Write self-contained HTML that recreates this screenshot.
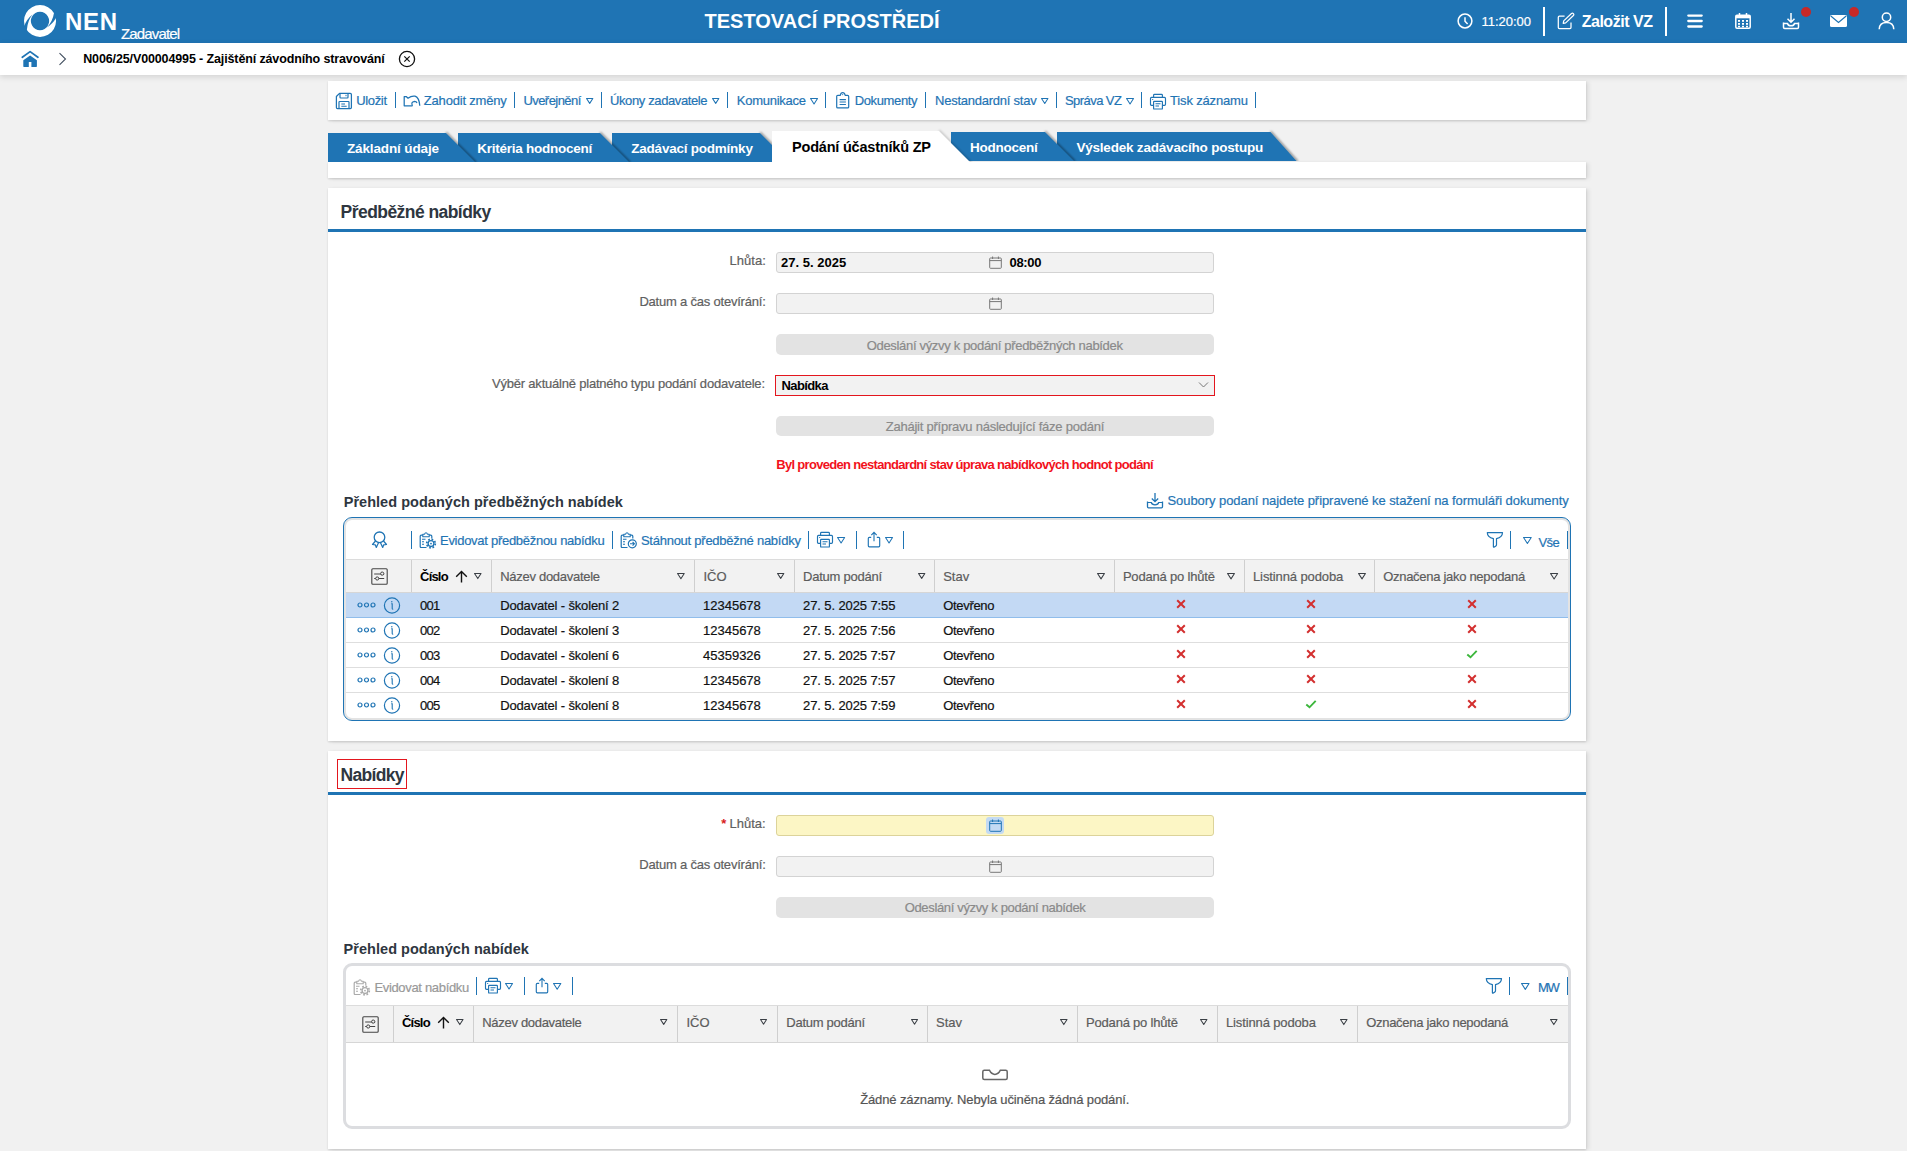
<!DOCTYPE html>
<html><head><meta charset="utf-8"><style>
html,body{margin:0;padding:0;width:1907px;height:1151px;overflow:hidden;background:#f1f1f1;font-family:"Liberation Sans",sans-serif;}
body>div,body>svg{position:absolute;}
.t{white-space:nowrap;}
.r{-webkit-text-stroke:0.2px currentColor;}
</style></head><body>
<div style="left:0px;top:0px;width:1907px;height:43px;background:#1f74b4"></div>
<svg style="left:24px;top:4.8px;width:32px;height:32px;" viewBox="0 0 32 32"><path fill="#fff" fill-rule="evenodd" d="M16 0a16 16 0 1 0 0.01 0zM16 6.85a9.15 9.15 0 1 1 -0.01 0z"/><path fill="#1f74b4" d="M8.6 9.6Q2.6 14.2 0.2 21.2L-1 21.5L-1 27L2.9 24.8Q3.6 15.5 8.6 9.6Z"/><path fill="#1f74b4" d="M22.6 22.6Q29 18.5 31.8 13.2L33 12.8L33 7L30 8Q28.6 17 22.6 22.6Z"/></svg>
<div class="t" style="left:65.00px;top:9.68px;font-size:24px;line-height:24px;letter-spacing:0.680px;color:#fff;font-weight:bold;">NEN</div>
<div class="t r" style="left:121.00px;top:26.30px;font-size:15px;line-height:15px;letter-spacing:-0.856px;color:#fff;">Zadavatel</div>
<div class="t" style="left:704.50px;top:11.47px;font-size:20px;line-height:20px;letter-spacing:0.011px;color:#fff;font-weight:bold;">TESTOVACÍ PROSTŘEDÍ</div>
<svg style="left:1457px;top:13px;width:16px;height:16px;" viewBox="0 0 16 16"><circle cx="8" cy="8" r="6.9" fill="none" stroke="#fff" stroke-width="1.5"/><path d="M8 4.2V8.3L10.6 11" fill="none" stroke="#fff" stroke-width="1.5"/></svg>
<div class="t r" style="left:1481.60px;top:14.70px;font-size:13px;line-height:13px;letter-spacing:-0.037px;color:#fff;">11:20:00</div>
<div style="left:1543px;top:7px;width:2px;height:29px;background:#fff"></div>
<svg style="left:1557px;top:12px;width:18px;height:18px;" viewBox="0 0 18 18"><path d="M7.6 4.1H2.4Q1.3 4.1 1.3 5.2V15.6Q1.3 16.7 2.4 16.7H12.9Q14 16.7 14 15.6V10.4" fill="none" stroke="#fff" stroke-width="1.25"/><path d="M6.2 11.4L6.7 8.9L14.5 1.5Q15.5 0.7 16.4 1.6Q17.3 2.5 16.4 3.5L8.7 10.9Z" fill="none" stroke="#fff" stroke-width="1.2" stroke-linejoin="round"/></svg>
<div class="t" style="left:1581.70px;top:13.56px;font-size:16px;line-height:16px;letter-spacing:-0.480px;color:#fff;font-weight:bold;">Založit VZ</div>
<div style="left:1665px;top:7px;width:2px;height:29px;background:#fff"></div>
<svg style="left:1686px;top:13px;width:18px;height:16px;" viewBox="0 0 18 16"><path d="M2.3 2.6H15.7M2.3 8H15.7M2.3 13.5H15.7" stroke="#fff" stroke-width="2.3" stroke-linecap="round"/></svg>
<svg style="left:1734px;top:12px;width:18px;height:18px;" viewBox="0 0 18 18"><rect x="1.8" y="3.3" width="14.4" height="13" rx="1.2" fill="none" stroke="#fff" stroke-width="1.5"/><rect x="1.8" y="3.3" width="14.4" height="3" fill="#fff"/><path d="M5.5 1V4.5M12.5 1V4.5" stroke="#fff" stroke-width="1.5"/><g fill="#fff"><rect x="4" y="8" width="2" height="1.8"/><rect x="8" y="8" width="2" height="1.8"/><rect x="12" y="8" width="2" height="1.8"/><rect x="4" y="11" width="2" height="1.8"/><rect x="8" y="11" width="2" height="1.8"/><rect x="12" y="11" width="2" height="1.8"/><rect x="4" y="13.8" width="2" height="1.5"/><rect x="8" y="13.8" width="2" height="1.5"/><rect x="12" y="13.8" width="2" height="1.5"/></g></svg>
<svg style="left:1782px;top:12px;width:18px;height:18px;" viewBox="0 0 18 18"><path d="M9 1V10M5.5 6.8L9 10.3L12.5 6.8" fill="none" stroke="#fff" stroke-width="1.5"/><path d="M1.5 10.5V15.3Q1.5 16.5 2.7 16.5H15.3Q16.5 16.5 16.5 15.3V10.5" fill="none" stroke="#fff" stroke-width="1.5"/><path d="M1.5 11.5H5.5Q6 13.8 9 13.8Q12 13.8 12.5 11.5H16.5" fill="none" stroke="#fff" stroke-width="1.5"/></svg>
<svg style="left:1801px;top:7px;width:10px;height:10px;" viewBox="0 0 10 10"><circle cx="5" cy="5" r="5" fill="#c62828"/></svg>
<svg style="left:1830px;top:15px;width:17px;height:12px;" viewBox="0 0 17 12"><rect x="0" y="0" width="17" height="12" rx="1.5" fill="#fff"/><path d="M0.8 1L8.5 7.5L16.2 1" fill="none" stroke="#1f74b4" stroke-width="1.2"/></svg>
<svg style="left:1849px;top:7px;width:10px;height:10px;" viewBox="0 0 10 10"><circle cx="5" cy="5" r="5" fill="#c62828"/></svg>
<svg style="left:1878px;top:12px;width:17px;height:18px;" viewBox="0 0 17 18"><circle cx="8.5" cy="5.3" r="4.2" fill="none" stroke="#fff" stroke-width="1.5"/><path d="M1.2 17.2Q1.5 10.6 8.5 10.6Q15.5 10.6 15.8 17.2" fill="none" stroke="#fff" stroke-width="1.5"/></svg>
<div style="left:0px;top:43px;width:1907px;height:32px;background:#fff;box-shadow:0 2px 6px rgba(0,0,0,0.13)"></div>
<svg style="left:21px;top:50px;width:18px;height:18px;" viewBox="0 0 18 18"><path d="M1.3 7.3L9.1 1.6L16.9 7.3" fill="none" stroke="#1f74b4" stroke-width="1.7" stroke-linecap="round" stroke-linejoin="round"/><path d="M2.3 10.2L9.1 5.4L15.9 10.2V16.3Q15.9 16.9 15.3 16.9H10.4V12H7.8V16.9H2.9Q2.3 16.9 2.3 16.3Z" fill="#1f74b4"/></svg>
<svg style="left:58px;top:52px;width:10px;height:14px;" viewBox="0 0 10 14"><path d="M1.5 1.2L7.5 7L1.5 12.8" fill="none" stroke="#3d4b5c" stroke-width="1.05"/></svg>
<div class="t" style="left:83.20px;top:53.32px;font-size:12.5px;line-height:12.5px;letter-spacing:-0.125px;color:#000;font-weight:bold;">N006/25/V00004995 - Zajištění závodního stravování</div>
<svg style="left:398px;top:50px;width:18px;height:18px;" viewBox="0 0 18 18"><circle cx="9" cy="9" r="7.6" fill="none" stroke="#111" stroke-width="1.3"/><path d="M6.3 6.3L11.7 11.7M11.7 6.3L6.3 11.7" stroke="#111" stroke-width="1.2"/></svg>
<div style="left:328px;top:81px;width:1258px;height:39px;background:#fff;box-shadow:0 1px 2px rgba(0,0,0,0.14),3px 1px 4px rgba(0,0,0,0.08)"></div>
<svg style="left:335px;top:92px;width:18px;height:18px;" viewBox="0 0 18 18"><path d="M4.5 1.4H15.3Q16.4 1.4 16.4 2.5V15.6Q16.4 16.6 15.3 16.6H2.5Q1.4 16.6 1.4 15.6V4.5Z" fill="none" stroke="#1f74b4" stroke-width="1.25" stroke-linejoin="round"/><path d="M5 1.4V5.3Q5 6 5.7 6H12.3Q13 6 13 5.3V1.4" fill="none" stroke="#1f74b4" stroke-width="1.2"/><path d="M11 2.8V4.2" stroke="#1f74b4" stroke-width="1"/><path d="M4 16.6V10.2Q4 9.5 4.7 9.5H13.3Q14 9.5 14 10.2V16.6" fill="none" stroke="#1f74b4" stroke-width="1.2"/><path d="M6.3 12H10M6.3 14.2H11.7" stroke="#1f74b4" stroke-width="1.1"/></svg>
<div class="t r" style="left:356.20px;top:94.20px;font-size:13px;line-height:13px;letter-spacing:-0.340px;color:#1f74b4;">Uložit</div>
<div style="left:395px;top:92px;width:1px;height:16px;background:#1f74b4"></div>
<svg style="left:403px;top:95px;width:18px;height:12px;" viewBox="0 0 18 12"><path d="M9.5 10.8H1.2V1.5H3.2L5 3.2Q8.5 0.6 12 1.2Q16 2.2 16.8 10.8" fill="none" stroke="#1f74b4" stroke-width="1.25" stroke-linejoin="round"/><path d="M9.5 10.8Q7.5 7 11.5 6.3Q13.5 6.3 14 8" fill="none" stroke="#1f74b4" stroke-width="1.2"/></svg>
<div class="t r" style="left:423.80px;top:94.20px;font-size:13px;line-height:13px;letter-spacing:-0.190px;color:#1f74b4;">Zahodit změny</div>
<div style="left:514px;top:92px;width:1px;height:16px;background:#1f74b4"></div>
<div class="t r" style="left:523.40px;top:94.20px;font-size:13px;line-height:13px;letter-spacing:-0.551px;color:#1f74b4;">Uveřejnění</div>
<svg style="left:586.4px;top:98.03999999999996px;width:7.400000000000091px;height:5.920000000000073px;overflow:visible" viewBox="0 0 7.400000000000091 5.920000000000073"><path d="M0.55 0.55H6.85L3.70 5.42Z" fill="none" stroke="#1f74b4" stroke-width="1.05" stroke-linejoin="round"/></svg>
<div style="left:601px;top:92px;width:1px;height:16px;background:#1f74b4"></div>
<div class="t r" style="left:610.00px;top:94.20px;font-size:13px;line-height:13px;letter-spacing:-0.383px;color:#1f74b4;">Úkony zadavatele</div>
<svg style="left:712.1999999999999px;top:98.03999999999996px;width:7.400000000000091px;height:5.920000000000073px;overflow:visible" viewBox="0 0 7.400000000000091 5.920000000000073"><path d="M0.55 0.55H6.85L3.70 5.42Z" fill="none" stroke="#1f74b4" stroke-width="1.05" stroke-linejoin="round"/></svg>
<div style="left:727px;top:92px;width:1px;height:16px;background:#1f74b4"></div>
<div class="t r" style="left:736.80px;top:94.20px;font-size:13px;line-height:13px;letter-spacing:-0.263px;color:#1f74b4;">Komunikace</div>
<svg style="left:810.0px;top:97.75999999999999px;width:8.100000000000023px;height:6.480000000000018px;overflow:visible" viewBox="0 0 8.100000000000023 6.480000000000018"><path d="M0.55 0.55H7.55L4.05 5.98Z" fill="none" stroke="#1f74b4" stroke-width="1.05" stroke-linejoin="round"/></svg>
<div style="left:825px;top:92px;width:1px;height:16px;background:#1f74b4"></div>
<svg style="left:835.5px;top:92.3px;width:14px;height:17px;" viewBox="0 0 14 17"><path d="M4.3 3.4H1.8Q0.7 3.4 0.7 4.4V14.9Q0.7 15.9 1.8 15.9H11.6Q12.7 15.9 12.7 14.9V4.4Q12.7 3.4 11.6 3.4H9.2Q8.6 0.7 6.7 0.7Q4.8 0.7 4.3 3.4Z" fill="none" stroke="#1f74b4" stroke-width="1.2" stroke-linejoin="round"/><circle cx="6.7" cy="2.6" r="0.6" fill="#1f74b4"/><path d="M3.6 7.6H9.9M3.6 10H9.9M3.6 12.5H9.9" stroke="#1f74b4" stroke-width="1.1"/></svg>
<div class="t r" style="left:854.70px;top:94.20px;font-size:13px;line-height:13px;letter-spacing:-0.360px;color:#1f74b4;">Dokumenty</div>
<div style="left:925px;top:92px;width:1px;height:16px;background:#1f74b4"></div>
<div class="t r" style="left:935.00px;top:94.20px;font-size:13px;line-height:13px;letter-spacing:-0.237px;color:#1f74b4;">Nestandardní stav</div>
<svg style="left:1041.4px;top:98.00000000000009px;width:7.499999999999773px;height:5.999999999999819px;overflow:visible" viewBox="0 0 7.499999999999773 5.999999999999819"><path d="M0.55 0.55H6.95L3.75 5.50Z" fill="none" stroke="#1f74b4" stroke-width="1.05" stroke-linejoin="round"/></svg>
<div style="left:1056px;top:92px;width:1px;height:16px;background:#1f74b4"></div>
<div class="t r" style="left:1065.00px;top:94.20px;font-size:13px;line-height:13px;letter-spacing:-0.566px;color:#1f74b4;">Správa VZ</div>
<svg style="left:1126.1000000000001px;top:97.76000000000013px;width:8.099999999999682px;height:6.4799999999997455px;overflow:visible" viewBox="0 0 8.099999999999682 6.4799999999997455"><path d="M0.55 0.55H7.55L4.05 5.98Z" fill="none" stroke="#1f74b4" stroke-width="1.05" stroke-linejoin="round"/></svg>
<div style="left:1141px;top:92px;width:1px;height:16px;background:#1f74b4"></div>
<svg style="left:1149px;top:92.5px;width:18px;height:18px;" viewBox="0 0 18 18"><path d="M4.6 4.3V2.2Q4.6 1.3 5.5 1.3H12.5Q13.4 1.3 13.4 2.2V4.3" fill="none" stroke="#1f74b4" stroke-width="1.15"/><path d="M4.6 12.3H2.5Q1.5 12.3 1.5 11.3V5.4Q1.5 4.4 2.5 4.4H15.5Q16.5 4.4 16.5 5.4V11.3Q16.5 12.3 15.5 12.3H13.4" fill="none" stroke="#1f74b4" stroke-width="1.15"/><path d="M3.2 6.5H4.2" stroke="#1f74b4" stroke-width="1"/><rect x="4.6" y="8.4" width="8.8" height="7.6" rx="0.6" fill="#fff" stroke="#1f74b4" stroke-width="1.15"/><path d="M6.5 10.8H11.5M6.5 13H10" stroke="#1f74b4" stroke-width="1.05"/></svg>
<div class="t r" style="left:1170.00px;top:94.20px;font-size:13px;line-height:13px;letter-spacing:-0.154px;color:#1f74b4;">Tisk záznamu</div>
<div style="left:1255px;top:92px;width:1px;height:16px;background:#1f74b4"></div>
<div style="left:328px;top:162px;width:1258px;height:16px;background:#fff;box-shadow:0 1px 2px rgba(0,0,0,0.14),3px 1px 4px rgba(0,0,0,0.08)"></div>
<svg style="left:326px;top:130px;width:157px;height:32px;z-index:10" viewBox="0 0 157 32"><defs><filter id="bl1" x="-50%" y="-50%" width="200%" height="200%"><feGaussianBlur stdDeviation="1.3"/></filter><clipPath id="cp1"><rect x="-2" y="0" width="157" height="32"/></clipPath></defs><g transform="translate(2,0)"><g clip-path="url(#cp1)"><path d="M118 3 L118.5 3 L147.8 32.2" stroke="rgba(0,0,0,0.42)" stroke-width="2.2" fill="none" filter="url(#bl1)"/><path d="M-1 2.3H118" stroke="rgba(0,0,0,0.2)" stroke-width="1.6" fill="none" filter="url(#bl1)"/></g><path d="M0 3H118L147 32H0Z" fill="#1f74b4"/></g></svg>
<svg style="left:456px;top:130px;width:181px;height:32px;z-index:9" viewBox="0 0 181 32"><defs><filter id="bl2" x="-50%" y="-50%" width="200%" height="200%"><feGaussianBlur stdDeviation="1.3"/></filter><clipPath id="cp2"><rect x="-2" y="0" width="181" height="32"/></clipPath></defs><g transform="translate(2,0)"><g clip-path="url(#cp2)"><path d="M142 3 L142.5 3 L171.8 32.2" stroke="rgba(0,0,0,0.42)" stroke-width="2.2" fill="none" filter="url(#bl2)"/><path d="M-1 2.3H142" stroke="rgba(0,0,0,0.2)" stroke-width="1.6" fill="none" filter="url(#bl2)"/></g><path d="M0 3H142L171 32H0Z" fill="#1f74b4"/></g></svg>
<svg style="left:610px;top:130px;width:187px;height:32px;z-index:8" viewBox="0 0 187 32"><defs><filter id="bl3" x="-50%" y="-50%" width="200%" height="200%"><feGaussianBlur stdDeviation="1.3"/></filter><clipPath id="cp3"><rect x="-2" y="0" width="187" height="32"/></clipPath></defs><g transform="translate(2,0)"><g clip-path="url(#cp3)"><path d="M148 3 L148.5 3 L177.8 32.2" stroke="rgba(0,0,0,0.42)" stroke-width="2.2" fill="none" filter="url(#bl3)"/><path d="M-1 2.3H148" stroke="rgba(0,0,0,0.2)" stroke-width="1.6" fill="none" filter="url(#bl3)"/></g><path d="M0 3H148L177 32H0Z" fill="#1f74b4"/></g></svg>
<svg style="left:770px;top:128px;width:208px;height:34px;z-index:12" viewBox="0 0 208 34"><defs><filter id="bl4" x="-50%" y="-50%" width="200%" height="200%"><feGaussianBlur stdDeviation="1.3"/></filter><clipPath id="cp4"><rect x="-2" y="0" width="208" height="34"/></clipPath></defs><g transform="translate(2,0)"><g clip-path="url(#cp4)"><path d="M167 3 L167.5 3 L198.8 34.2" stroke="rgba(0,0,0,0.2)" stroke-width="2.2" fill="none" filter="url(#bl4)"/><path d="M-1 2.3H167" stroke="rgba(0,0,0,0.0)" stroke-width="1.6" fill="none" filter="url(#bl4)"/></g><path d="M0 3H167L198 34H0Z" fill="#fff"/></g></svg>
<svg style="left:949px;top:129px;width:133px;height:32px;z-index:7" viewBox="0 0 133 32"><defs><filter id="bl5" x="-50%" y="-50%" width="200%" height="200%"><feGaussianBlur stdDeviation="1.3"/></filter><clipPath id="cp5"><rect x="-2" y="0" width="133" height="32"/></clipPath></defs><g transform="translate(2,0)"><g clip-path="url(#cp5)"><path d="M94 3 L94.5 3 L123.8 32.2" stroke="rgba(0,0,0,0.42)" stroke-width="2.2" fill="none" filter="url(#bl5)"/><path d="M-1 2.3H94" stroke="rgba(0,0,0,0.2)" stroke-width="1.6" fill="none" filter="url(#bl5)"/></g><path d="M0 3H94L123 32H0Z" fill="#1f74b4"/></g></svg>
<svg style="left:1055px;top:129px;width:249.5px;height:32px;z-index:6" viewBox="0 0 249.5 32"><defs><filter id="bl6" x="-50%" y="-50%" width="200%" height="200%"><feGaussianBlur stdDeviation="1.3"/></filter><clipPath id="cp6"><rect x="-2" y="0" width="249.5" height="32"/></clipPath></defs><g transform="translate(2,0)"><g clip-path="url(#cp6)"><path d="M213.5 3 L214.0 3 L240.3 32.2" stroke="rgba(0,0,0,0.42)" stroke-width="2.2" fill="none" filter="url(#bl6)"/><path d="M-1 2.3H213.5" stroke="rgba(0,0,0,0.2)" stroke-width="1.6" fill="none" filter="url(#bl6)"/></g><path d="M0 3H213.5L239.5 32H0Z" fill="#1f74b4"/></g></svg>
<div class="t" style="left:347.00px;top:141.57px;font-size:13.5px;line-height:13.5px;letter-spacing:-0.135px;color:#fff;font-weight:bold;z-index:20">Základní údaje</div>
<div class="t" style="left:477.30px;top:141.57px;font-size:13.5px;line-height:13.5px;letter-spacing:-0.254px;color:#fff;font-weight:bold;z-index:20">Kritéria hodnocení</div>
<div class="t" style="left:631.30px;top:141.57px;font-size:13.5px;line-height:13.5px;letter-spacing:-0.230px;color:#fff;font-weight:bold;z-index:20">Zadávací podmínky</div>
<div class="t" style="left:792.00px;top:139.93px;font-size:14.5px;line-height:14.5px;letter-spacing:-0.200px;color:#000;font-weight:bold;z-index:20">Podání účastníků ZP</div>
<div class="t" style="left:970.00px;top:140.87px;font-size:13.5px;line-height:13.5px;letter-spacing:-0.242px;color:#fff;font-weight:bold;z-index:20">Hodnocení</div>
<div class="t" style="left:1076.40px;top:140.87px;font-size:13.5px;line-height:13.5px;letter-spacing:-0.201px;color:#fff;font-weight:bold;z-index:20">Výsledek zadávacího postupu</div>
<div style="left:328px;top:188px;width:1258px;height:553px;background:#fff;box-shadow:0 1px 2px rgba(0,0,0,0.14),3px 1px 4px rgba(0,0,0,0.08)"></div>
<div class="t" style="left:340.60px;top:204.19px;font-size:17.5px;line-height:17.5px;letter-spacing:-0.557px;color:#2e3640;font-weight:bold;">Předběžné nabídky</div>
<div style="left:328px;top:229px;width:1258px;height:3px;background:#1f74b4"></div>
<div class="t r" style="left:729.60px;top:254.00px;font-size:13px;line-height:13px;letter-spacing:0.012px;color:#606060;">Lhůta:</div>
<div style="left:776px;top:252px;width:438px;height:21px;background:#f2f2f2;border:1px solid #d3d3d3;border-radius:3px;box-sizing:border-box"></div>
<div class="t" style="left:781.00px;top:256.00px;font-size:13px;line-height:13px;letter-spacing:0.023px;color:#000;font-weight:bold;">27. 5. 2025</div>
<svg style="left:988.5px;top:255.5px;width:13px;height:13px;" viewBox="0 0 13 13"><rect x="0.7" y="2" width="11.6" height="10.3" rx="0.8" fill="none" stroke="#777" stroke-width="1"/><path d="M0.7 4.6H12.3" stroke="#777" stroke-width="1"/><path d="M3.6 0.5V3M9.4 0.5V3" stroke="#777" stroke-width="1"/></svg>
<div class="t" style="left:1009.50px;top:256.00px;font-size:13px;line-height:13px;letter-spacing:-0.345px;color:#000;font-weight:bold;">08:00</div>
<div class="t r" style="left:639.40px;top:295.00px;font-size:13px;line-height:13px;letter-spacing:-0.209px;color:#606060;">Datum a čas otevírání:</div>
<div style="left:776px;top:293px;width:438px;height:21px;background:#f2f2f2;border:1px solid #d3d3d3;border-radius:3px;box-sizing:border-box"></div>
<svg style="left:988.5px;top:296.5px;width:13px;height:13px;" viewBox="0 0 13 13"><rect x="0.7" y="2" width="11.6" height="10.3" rx="0.8" fill="none" stroke="#777" stroke-width="1"/><path d="M0.7 4.6H12.3" stroke="#777" stroke-width="1"/><path d="M3.6 0.5V3M9.4 0.5V3" stroke="#777" stroke-width="1"/></svg>
<div style="left:776px;top:334px;width:438px;height:21px;background:#e3e3e3;border-radius:5px"></div>
<div class="t r" style="left:866.70px;top:338.50px;font-size:13px;line-height:13px;letter-spacing:-0.317px;color:#8a8a8a;">Odeslání výzvy k podání předběžných nabídek</div>
<div class="t r" style="left:492.00px;top:377.00px;font-size:13px;line-height:13px;letter-spacing:-0.209px;color:#606060;">Výběr aktuálně platného typu podání dodavatele:</div>
<div style="left:775px;top:375px;width:440px;height:21px;background:#f2f2f2;border:1.5px solid #e3161e;box-sizing:border-box"></div>
<div class="t" style="left:781.50px;top:378.50px;font-size:13px;line-height:13px;letter-spacing:-0.617px;color:#000;font-weight:bold;">Nabídka</div>
<svg style="left:1198px;top:381px;width:11px;height:8px;" viewBox="0 0 11 8"><path d="M1 1.5L5.5 6L10 1.5" fill="none" stroke="#777" stroke-width="1"/></svg>
<div style="left:776px;top:416px;width:438px;height:20px;background:#e3e3e3;border-radius:5px"></div>
<div class="t r" style="left:885.70px;top:420.00px;font-size:13px;line-height:13px;letter-spacing:-0.232px;color:#8a8a8a;">Zahájit přípravu následující fáze podání</div>
<div class="t" style="left:776.30px;top:458.00px;font-size:13px;line-height:13px;letter-spacing:-0.694px;color:#f2121c;font-weight:bold;">Byl proveden nestandardní stav úprava nabídkových hodnot podání</div>
<div class="t" style="left:343.70px;top:495.03px;font-size:14.5px;line-height:14.5px;letter-spacing:0.033px;color:#2e3640;font-weight:bold;">Přehled podaných předběžných nabídek</div>
<svg style="left:1146px;top:492px;width:18px;height:17px;" viewBox="0 0 18 17"><path d="M9 1V9.5M5.8 6.5L9 9.7L12.2 6.5" fill="none" stroke="#1f74b4" stroke-width="1.3"/><path d="M1.5 9.5V14.8Q1.5 15.8 2.5 15.8H15.5Q16.5 15.8 16.5 14.8V9.5" fill="none" stroke="#1f74b4" stroke-width="1.3"/><path d="M1.5 10.5H5.3Q5.8 12.8 9 12.8Q12.2 12.8 12.7 10.5H16.5" fill="none" stroke="#1f74b4" stroke-width="1.2"/></svg>
<div class="t r" style="left:1167.50px;top:494.30px;font-size:13px;line-height:13px;letter-spacing:-0.064px;color:#1f74b4;">Soubory podaní najdete připravené ke stažení na formuláři dokumenty</div>
<div style="left:343px;top:517px;width:1228px;height:204px;border:1px solid #1f74b4;border-radius:9px;box-shadow:inset 0 0 0 2px #e3e3e3;box-sizing:border-box"></div>
<svg style="left:371px;top:531px;width:17px;height:18px;" viewBox="0 0 17 18"><circle cx="8.5" cy="6.3" r="5.3" fill="none" stroke="#1f74b4" stroke-width="1.3"/><path d="M4.5 10L1.5 13.5L4.3 13.8L5.3 16.5L7.5 11.7M12.5 10L15.5 13.5L12.7 13.8L11.7 16.5L9.5 11.7" fill="none" stroke="#1f74b4" stroke-width="1.2" stroke-linejoin="round"/></svg>
<div style="left:411px;top:531px;width:1px;height:18px;background:#1f74b4"></div>
<svg style="left:419px;top:531.5px;width:18px;height:17px;" viewBox="0 0 18 17"><path d="M7.5 15.5H2.2Q1.2 15.5 1.2 14.5V4.2Q1.2 3.2 2.2 3.2H3.8M10.2 3.2H11.8Q12.8 3.2 12.8 4.2V6.5" fill="none" stroke="#1f74b4" stroke-width="1.2"/><path d="M3.8 4.8V2.2H5.6Q6 0.7 7 0.7Q8 0.7 8.4 2.2H10.2V4.8Z" fill="none" stroke="#1f74b4" stroke-width="1.1" stroke-linejoin="round"/><path d="M3 7.3H6.5M3 9.8H5M3 12.3H5" stroke="#1f74b4" stroke-width="1.1"/><circle cx="12" cy="11.6" r="4.3" fill="none" stroke="#1f74b4" stroke-width="1.7" stroke-dasharray="1.7 1.68"/><circle cx="12" cy="11.6" r="2.9" fill="none" stroke="#1f74b4" stroke-width="1.3"/><circle cx="12" cy="11.6" r="0.9" fill="#1f74b4"/></svg>
<div class="t r" style="left:440.00px;top:534.40px;font-size:13px;line-height:13px;letter-spacing:-0.280px;color:#1f74b4;">Evidovat předběžnou nabídku</div>
<div style="left:612px;top:531px;width:1px;height:18px;background:#1f74b4"></div>
<svg style="left:619.5px;top:531.5px;width:18px;height:17px;" viewBox="0 0 18 17"><path d="M7.5 15.5H2.2Q1.2 15.5 1.2 14.5V4.2Q1.2 3.2 2.2 3.2H3.8M10.2 3.2H11.8Q12.8 3.2 12.8 4.2V6.5" fill="none" stroke="#1f74b4" stroke-width="1.2"/><path d="M3.8 4.8V2.2H5.6Q6 0.7 7 0.7Q8 0.7 8.4 2.2H10.2V4.8Z" fill="none" stroke="#1f74b4" stroke-width="1.1" stroke-linejoin="round"/><path d="M3 7.3H6.5M3 9.8H5M3 12.3H5" stroke="#1f74b4" stroke-width="1.1"/><circle cx="12.3" cy="11.8" r="4" fill="#fff" stroke="#1f74b4" stroke-width="1.2"/><path d="M10 11.8H14.3M12.6 10L14.4 11.8L12.6 13.6" fill="none" stroke="#1f74b4" stroke-width="1.1"/></svg>
<div class="t r" style="left:640.90px;top:534.40px;font-size:13px;line-height:13px;letter-spacing:-0.247px;color:#1f74b4;">Stáhnout předběžné nabídky</div>
<div style="left:808px;top:531px;width:1px;height:18px;background:#1f74b4"></div>
<svg style="left:816px;top:531px;width:18px;height:18px;" viewBox="0 0 18 18"><path d="M4.6 4.3V2.2Q4.6 1.3 5.5 1.3H12.5Q13.4 1.3 13.4 2.2V4.3" fill="none" stroke="#1f74b4" stroke-width="1.15"/><path d="M4.6 12.3H2.5Q1.5 12.3 1.5 11.3V5.4Q1.5 4.4 2.5 4.4H15.5Q16.5 4.4 16.5 5.4V11.3Q16.5 12.3 15.5 12.3H13.4" fill="none" stroke="#1f74b4" stroke-width="1.15"/><path d="M3.2 6.5H4.2" stroke="#1f74b4" stroke-width="1"/><rect x="4.6" y="8.4" width="8.8" height="7.6" rx="0.6" fill="#fff" stroke="#1f74b4" stroke-width="1.15"/><path d="M6.5 10.8H11.5M6.5 13H10" stroke="#1f74b4" stroke-width="1.05"/></svg>
<svg style="left:836.9px;top:536.72px;width:8.200000000000045px;height:6.560000000000037px;overflow:visible" viewBox="0 0 8.200000000000045 6.560000000000037"><path d="M0.55 0.55H7.65L4.10 6.06Z" fill="none" stroke="#1f74b4" stroke-width="1.05" stroke-linejoin="round"/></svg>
<div style="left:856px;top:531px;width:1px;height:18px;background:#1f74b4"></div>
<svg style="left:866px;top:531px;width:16px;height:18px;" viewBox="0 0 16 18"><path d="M8 10.3V1.6M5.3 4.2L8 1.3L10.7 4.2" fill="none" stroke="#1f74b4" stroke-width="1.1"/><path d="M5.2 6.3H3.3Q2.3 6.3 2.3 7.3V14.8Q2.3 15.8 3.3 15.8H12.7Q13.7 15.8 13.7 14.8V7.3Q13.7 6.3 12.7 6.3H10.8" fill="none" stroke="#1f74b4" stroke-width="1.15"/></svg>
<svg style="left:884.8px;top:536.76px;width:8.100000000000023px;height:6.480000000000018px;overflow:visible" viewBox="0 0 8.100000000000023 6.480000000000018"><path d="M0.55 0.55H7.55L4.05 5.98Z" fill="none" stroke="#1f74b4" stroke-width="1.05" stroke-linejoin="round"/></svg>
<div style="left:903px;top:531px;width:1px;height:18px;background:#1f74b4"></div>
<svg style="left:1486px;top:531px;width:18px;height:17px;" viewBox="0 0 18 17"><path d="M1.3 1.6H16.5Q16.5 6.3 10.5 7.6V13.8Q10.5 14.5 9.9 14.9L8.3 16.1Q7.4 16.6 7.4 15.6V7.6Q1.3 6.3 1.3 1.6Z" fill="none" stroke="#1f74b4" stroke-width="1.2" stroke-linejoin="round"/></svg>
<div style="left:1510px;top:531px;width:1px;height:18px;background:#1f74b4"></div>
<svg style="left:1522.8000000000002px;top:536.9800000000001px;width:8.799999999999727px;height:7.039999999999782px;overflow:visible" viewBox="0 0 8.799999999999727 7.039999999999782"><path d="M0.55 0.55H8.25L4.40 6.54Z" fill="none" stroke="#1f74b4" stroke-width="1.05" stroke-linejoin="round"/></svg>
<div class="t r" style="left:1538.40px;top:535.80px;font-size:13px;line-height:13px;letter-spacing:-0.513px;color:#1f74b4;">Vše</div>
<div style="left:1567px;top:531px;width:1px;height:18px;background:#1f74b4"></div>
<div style="left:346px;top:559px;width:1221.5px;height:34px;background:#f2f2f2;border-top:1px solid #dcdcdc;border-bottom:1px solid #d6d6d6;box-sizing:border-box"></div>
<div style="left:411px;top:560px;width:1px;height:32px;background:#cfcfcf"></div>
<div style="left:491px;top:560px;width:1px;height:32px;background:#cfcfcf"></div>
<div style="left:694px;top:560px;width:1px;height:32px;background:#cfcfcf"></div>
<div style="left:794px;top:560px;width:1px;height:32px;background:#cfcfcf"></div>
<div style="left:934px;top:560px;width:1px;height:32px;background:#cfcfcf"></div>
<div style="left:1114px;top:560px;width:1px;height:32px;background:#cfcfcf"></div>
<div style="left:1244px;top:560px;width:1px;height:32px;background:#cfcfcf"></div>
<div style="left:1374px;top:560px;width:1px;height:32px;background:#cfcfcf"></div>
<svg style="left:370.5px;top:567.5px;width:17px;height:17px;" viewBox="0 0 17 17"><rect x="0.8" y="0.8" width="15.4" height="15.4" rx="1" fill="none" stroke="#444" stroke-width="1.1"/><path d="M3.2 6H13.2M3.2 10.5H13.2" stroke="#444" stroke-width="1"/><circle cx="11.2" cy="5.6" r="1.6" fill="#f2f2f2" stroke="#444" stroke-width="1"/><circle cx="6.2" cy="10.5" r="1.6" fill="#f2f2f2" stroke="#444" stroke-width="1"/></svg>
<div class="t" style="left:420.10px;top:570.00px;font-size:13px;line-height:13px;letter-spacing:-0.821px;color:#000;font-weight:bold;">Číslo</div>
<svg style="left:454.5px;top:569.5px;width:13px;height:13px;" viewBox="0 0 13 13"><path d="M6.5 12.5V1.5M1.2 6.8L6.5 1.5L11.8 6.8" fill="none" stroke="#111" stroke-width="1.4"/></svg>
<svg style="left:474.09999999999997px;top:572.9599999999999px;width:7.60000000000008px;height:6.080000000000064px;overflow:visible" viewBox="0 0 7.60000000000008 6.080000000000064"><path d="M0.55 0.55H7.05L3.80 5.58Z" fill="none" stroke="#3a3f45" stroke-width="1.05" stroke-linejoin="round"/></svg>
<div class="t r" style="left:500.20px;top:570.00px;font-size:13px;line-height:13px;letter-spacing:-0.284px;color:#5c5c5c;">Název dodavatele</div>
<svg style="left:676.9px;top:572.88px;width:7.800000000000068px;height:6.240000000000055px;overflow:visible" viewBox="0 0 7.800000000000068 6.240000000000055"><path d="M0.55 0.55H7.25L3.90 5.74Z" fill="none" stroke="#3a3f45" stroke-width="1.05" stroke-linejoin="round"/></svg>
<div class="t r" style="left:703.50px;top:570.00px;font-size:13px;line-height:13px;letter-spacing:0.000px;color:#5c5c5c;">IČO</div>
<svg style="left:777.4px;top:573.04px;width:7.400000000000091px;height:5.920000000000073px;overflow:visible" viewBox="0 0 7.400000000000091 5.920000000000073"><path d="M0.55 0.55H6.85L3.70 5.42Z" fill="none" stroke="#3a3f45" stroke-width="1.05" stroke-linejoin="round"/></svg>
<div class="t r" style="left:803.00px;top:570.00px;font-size:13px;line-height:13px;letter-spacing:-0.240px;color:#5c5c5c;">Datum podání</div>
<svg style="left:917.6999999999999px;top:573.04px;width:7.400000000000091px;height:5.920000000000073px;overflow:visible" viewBox="0 0 7.400000000000091 5.920000000000073"><path d="M0.55 0.55H6.85L3.70 5.42Z" fill="none" stroke="#3a3f45" stroke-width="1.05" stroke-linejoin="round"/></svg>
<div class="t r" style="left:943.20px;top:570.00px;font-size:13px;line-height:13px;letter-spacing:0.000px;color:#5c5c5c;">Stav</div>
<svg style="left:1097.1000000000001px;top:572.8000000000001px;width:7.999999999999773px;height:6.399999999999818px;overflow:visible" viewBox="0 0 7.999999999999773 6.399999999999818"><path d="M0.55 0.55H7.45L4.00 5.90Z" fill="none" stroke="#3a3f45" stroke-width="1.05" stroke-linejoin="round"/></svg>
<div class="t r" style="left:1122.90px;top:570.00px;font-size:13px;line-height:13px;letter-spacing:-0.193px;color:#5c5c5c;">Podaná po lhůtě</div>
<svg style="left:1227.3000000000002px;top:572.8000000000001px;width:7.999999999999773px;height:6.399999999999818px;overflow:visible" viewBox="0 0 7.999999999999773 6.399999999999818"><path d="M0.55 0.55H7.45L4.00 5.90Z" fill="none" stroke="#3a3f45" stroke-width="1.05" stroke-linejoin="round"/></svg>
<div class="t r" style="left:1253.00px;top:570.00px;font-size:13px;line-height:13px;letter-spacing:-0.110px;color:#5c5c5c;">Listinná podoba</div>
<svg style="left:1357.5px;top:572.8px;width:8.0px;height:6.4px;overflow:visible" viewBox="0 0 8.0 6.4"><path d="M0.55 0.55H7.45L4.00 5.90Z" fill="none" stroke="#3a3f45" stroke-width="1.05" stroke-linejoin="round"/></svg>
<div class="t r" style="left:1383.20px;top:570.00px;font-size:13px;line-height:13px;letter-spacing:-0.295px;color:#5c5c5c;">Označena jako nepodaná</div>
<svg style="left:1549.9px;top:572.72px;width:8.199999999999818px;height:6.559999999999855px;overflow:visible" viewBox="0 0 8.199999999999818 6.559999999999855"><path d="M0.55 0.55H7.65L4.10 6.06Z" fill="none" stroke="#3a3f45" stroke-width="1.05" stroke-linejoin="round"/></svg>
<div style="left:346px;top:593px;width:1221.5px;height:25px;background:#c3d9f4;border-bottom:1px solid #90bdeb;box-sizing:border-box"></div>
<div style="left:346px;top:642px;width:1221.5px;height:1px;background:#dedede"></div>
<div style="left:346px;top:667px;width:1221.5px;height:1px;background:#dedede"></div>
<div style="left:346px;top:692px;width:1221.5px;height:1px;background:#dedede"></div>
<svg style="left:357px;top:602px;width:19px;height:6px;" viewBox="0 0 19 6"><g fill="none" stroke="#1f74b4" stroke-width="1.2"><circle cx="3" cy="3" r="2"/><circle cx="9.5" cy="3" r="2"/><circle cx="16" cy="3" r="2"/></g></svg>
<svg style="left:383px;top:596.5px;width:18px;height:17px;" viewBox="0 0 18 17"><circle cx="9" cy="8.5" r="7.6" fill="none" stroke="#1f74b4" stroke-width="1.2"/><path d="M8.2 6.8H9.2V11.5Q9.2 12.3 10.2 12.3" fill="none" stroke="#1f74b4" stroke-width="1.1"/><circle cx="8.8" cy="4.8" r="0.7" fill="#1f74b4"/></svg>
<div class="t r" style="left:420.10px;top:599.20px;font-size:13px;line-height:13px;letter-spacing:-0.755px;color:#111;">001</div>
<div class="t r" style="left:500.20px;top:599.20px;font-size:13px;line-height:13px;letter-spacing:-0.157px;color:#111;">Dodavatel - školení 2</div>
<div class="t r" style="left:703.10px;top:599.20px;font-size:13px;line-height:13px;letter-spacing:-0.021px;color:#111;">12345678</div>
<div class="t r" style="left:803.00px;top:599.20px;font-size:13px;line-height:13px;letter-spacing:-0.099px;color:#111;">27. 5. 2025 7:55</div>
<div class="t r" style="left:943.20px;top:599.20px;font-size:13px;line-height:13px;letter-spacing:-0.314px;color:#111;">Otevřeno</div>
<svg style="left:1175.6px;top:599.4px;width:10px;height:10px;" viewBox="0 0 10 10"><path d="M1.2 1.2L8.8 8.8M8.8 1.2L1.2 8.8" stroke="#d32f2f" stroke-width="2"/></svg>
<svg style="left:1305.6px;top:599.4px;width:10px;height:10px;" viewBox="0 0 10 10"><path d="M1.2 1.2L8.8 8.8M8.8 1.2L1.2 8.8" stroke="#d32f2f" stroke-width="2"/></svg>
<svg style="left:1467.2px;top:599.4px;width:10px;height:10px;" viewBox="0 0 10 10"><path d="M1.2 1.2L8.8 8.8M8.8 1.2L1.2 8.8" stroke="#d32f2f" stroke-width="2"/></svg>
<svg style="left:357px;top:627px;width:19px;height:6px;" viewBox="0 0 19 6"><g fill="none" stroke="#1f74b4" stroke-width="1.2"><circle cx="3" cy="3" r="2"/><circle cx="9.5" cy="3" r="2"/><circle cx="16" cy="3" r="2"/></g></svg>
<svg style="left:383px;top:621.5px;width:18px;height:17px;" viewBox="0 0 18 17"><circle cx="9" cy="8.5" r="7.6" fill="none" stroke="#1f74b4" stroke-width="1.2"/><path d="M8.2 6.8H9.2V11.5Q9.2 12.3 10.2 12.3" fill="none" stroke="#1f74b4" stroke-width="1.1"/><circle cx="8.8" cy="4.8" r="0.7" fill="#1f74b4"/></svg>
<div class="t r" style="left:420.10px;top:624.20px;font-size:13px;line-height:13px;letter-spacing:-0.755px;color:#111;">002</div>
<div class="t r" style="left:500.20px;top:624.20px;font-size:13px;line-height:13px;letter-spacing:-0.157px;color:#111;">Dodavatel - školení 3</div>
<div class="t r" style="left:703.10px;top:624.20px;font-size:13px;line-height:13px;letter-spacing:-0.021px;color:#111;">12345678</div>
<div class="t r" style="left:803.00px;top:624.20px;font-size:13px;line-height:13px;letter-spacing:-0.099px;color:#111;">27. 5. 2025 7:56</div>
<div class="t r" style="left:943.20px;top:624.20px;font-size:13px;line-height:13px;letter-spacing:-0.314px;color:#111;">Otevřeno</div>
<svg style="left:1175.6px;top:624.4px;width:10px;height:10px;" viewBox="0 0 10 10"><path d="M1.2 1.2L8.8 8.8M8.8 1.2L1.2 8.8" stroke="#d32f2f" stroke-width="2"/></svg>
<svg style="left:1305.6px;top:624.4px;width:10px;height:10px;" viewBox="0 0 10 10"><path d="M1.2 1.2L8.8 8.8M8.8 1.2L1.2 8.8" stroke="#d32f2f" stroke-width="2"/></svg>
<svg style="left:1467.2px;top:624.4px;width:10px;height:10px;" viewBox="0 0 10 10"><path d="M1.2 1.2L8.8 8.8M8.8 1.2L1.2 8.8" stroke="#d32f2f" stroke-width="2"/></svg>
<svg style="left:357px;top:652px;width:19px;height:6px;" viewBox="0 0 19 6"><g fill="none" stroke="#1f74b4" stroke-width="1.2"><circle cx="3" cy="3" r="2"/><circle cx="9.5" cy="3" r="2"/><circle cx="16" cy="3" r="2"/></g></svg>
<svg style="left:383px;top:646.5px;width:18px;height:17px;" viewBox="0 0 18 17"><circle cx="9" cy="8.5" r="7.6" fill="none" stroke="#1f74b4" stroke-width="1.2"/><path d="M8.2 6.8H9.2V11.5Q9.2 12.3 10.2 12.3" fill="none" stroke="#1f74b4" stroke-width="1.1"/><circle cx="8.8" cy="4.8" r="0.7" fill="#1f74b4"/></svg>
<div class="t r" style="left:420.10px;top:649.20px;font-size:13px;line-height:13px;letter-spacing:-0.755px;color:#111;">003</div>
<div class="t r" style="left:500.20px;top:649.20px;font-size:13px;line-height:13px;letter-spacing:-0.157px;color:#111;">Dodavatel - školení 6</div>
<div class="t r" style="left:703.10px;top:649.20px;font-size:13px;line-height:13px;letter-spacing:-0.021px;color:#111;">45359326</div>
<div class="t r" style="left:803.00px;top:649.20px;font-size:13px;line-height:13px;letter-spacing:-0.099px;color:#111;">27. 5. 2025 7:57</div>
<div class="t r" style="left:943.20px;top:649.20px;font-size:13px;line-height:13px;letter-spacing:-0.314px;color:#111;">Otevřeno</div>
<svg style="left:1175.6px;top:649.4px;width:10px;height:10px;" viewBox="0 0 10 10"><path d="M1.2 1.2L8.8 8.8M8.8 1.2L1.2 8.8" stroke="#d32f2f" stroke-width="2"/></svg>
<svg style="left:1305.6px;top:649.4px;width:10px;height:10px;" viewBox="0 0 10 10"><path d="M1.2 1.2L8.8 8.8M8.8 1.2L1.2 8.8" stroke="#d32f2f" stroke-width="2"/></svg>
<svg style="left:1466.2px;top:649px;width:12px;height:10px;" viewBox="0 0 12 10"><path d="M1.3 5.5L4.5 8.3L10.7 1.8" fill="none" stroke="#3cb63c" stroke-width="1.9"/></svg>
<svg style="left:357px;top:677px;width:19px;height:6px;" viewBox="0 0 19 6"><g fill="none" stroke="#1f74b4" stroke-width="1.2"><circle cx="3" cy="3" r="2"/><circle cx="9.5" cy="3" r="2"/><circle cx="16" cy="3" r="2"/></g></svg>
<svg style="left:383px;top:671.5px;width:18px;height:17px;" viewBox="0 0 18 17"><circle cx="9" cy="8.5" r="7.6" fill="none" stroke="#1f74b4" stroke-width="1.2"/><path d="M8.2 6.8H9.2V11.5Q9.2 12.3 10.2 12.3" fill="none" stroke="#1f74b4" stroke-width="1.1"/><circle cx="8.8" cy="4.8" r="0.7" fill="#1f74b4"/></svg>
<div class="t r" style="left:420.10px;top:674.20px;font-size:13px;line-height:13px;letter-spacing:-0.755px;color:#111;">004</div>
<div class="t r" style="left:500.20px;top:674.20px;font-size:13px;line-height:13px;letter-spacing:-0.157px;color:#111;">Dodavatel - školení 8</div>
<div class="t r" style="left:703.10px;top:674.20px;font-size:13px;line-height:13px;letter-spacing:-0.021px;color:#111;">12345678</div>
<div class="t r" style="left:803.00px;top:674.20px;font-size:13px;line-height:13px;letter-spacing:-0.099px;color:#111;">27. 5. 2025 7:57</div>
<div class="t r" style="left:943.20px;top:674.20px;font-size:13px;line-height:13px;letter-spacing:-0.314px;color:#111;">Otevřeno</div>
<svg style="left:1175.6px;top:674.4px;width:10px;height:10px;" viewBox="0 0 10 10"><path d="M1.2 1.2L8.8 8.8M8.8 1.2L1.2 8.8" stroke="#d32f2f" stroke-width="2"/></svg>
<svg style="left:1305.6px;top:674.4px;width:10px;height:10px;" viewBox="0 0 10 10"><path d="M1.2 1.2L8.8 8.8M8.8 1.2L1.2 8.8" stroke="#d32f2f" stroke-width="2"/></svg>
<svg style="left:1467.2px;top:674.4px;width:10px;height:10px;" viewBox="0 0 10 10"><path d="M1.2 1.2L8.8 8.8M8.8 1.2L1.2 8.8" stroke="#d32f2f" stroke-width="2"/></svg>
<svg style="left:357px;top:702px;width:19px;height:6px;" viewBox="0 0 19 6"><g fill="none" stroke="#1f74b4" stroke-width="1.2"><circle cx="3" cy="3" r="2"/><circle cx="9.5" cy="3" r="2"/><circle cx="16" cy="3" r="2"/></g></svg>
<svg style="left:383px;top:696.5px;width:18px;height:17px;" viewBox="0 0 18 17"><circle cx="9" cy="8.5" r="7.6" fill="none" stroke="#1f74b4" stroke-width="1.2"/><path d="M8.2 6.8H9.2V11.5Q9.2 12.3 10.2 12.3" fill="none" stroke="#1f74b4" stroke-width="1.1"/><circle cx="8.8" cy="4.8" r="0.7" fill="#1f74b4"/></svg>
<div class="t r" style="left:420.10px;top:699.20px;font-size:13px;line-height:13px;letter-spacing:-0.755px;color:#111;">005</div>
<div class="t r" style="left:500.20px;top:699.20px;font-size:13px;line-height:13px;letter-spacing:-0.157px;color:#111;">Dodavatel - školení 8</div>
<div class="t r" style="left:703.10px;top:699.20px;font-size:13px;line-height:13px;letter-spacing:-0.021px;color:#111;">12345678</div>
<div class="t r" style="left:803.00px;top:699.20px;font-size:13px;line-height:13px;letter-spacing:-0.099px;color:#111;">27. 5. 2025 7:59</div>
<div class="t r" style="left:943.20px;top:699.20px;font-size:13px;line-height:13px;letter-spacing:-0.314px;color:#111;">Otevřeno</div>
<svg style="left:1175.6px;top:699.4px;width:10px;height:10px;" viewBox="0 0 10 10"><path d="M1.2 1.2L8.8 8.8M8.8 1.2L1.2 8.8" stroke="#d32f2f" stroke-width="2"/></svg>
<svg style="left:1304.6px;top:699px;width:12px;height:10px;" viewBox="0 0 12 10"><path d="M1.3 5.5L4.5 8.3L10.7 1.8" fill="none" stroke="#3cb63c" stroke-width="1.9"/></svg>
<svg style="left:1467.2px;top:699.4px;width:10px;height:10px;" viewBox="0 0 10 10"><path d="M1.2 1.2L8.8 8.8M8.8 1.2L1.2 8.8" stroke="#d32f2f" stroke-width="2"/></svg>
<div style="left:328px;top:751px;width:1258px;height:398px;background:#fff;box-shadow:0 1px 2px rgba(0,0,0,0.14),3px 1px 4px rgba(0,0,0,0.08)"></div>
<div style="left:337px;top:759px;width:70px;height:30px;border:1px solid #e3161e;box-sizing:border-box"></div>
<div class="t" style="left:340.50px;top:767.19px;font-size:17.5px;line-height:17.5px;letter-spacing:-0.696px;color:#2e3640;font-weight:bold;">Nabídky</div>
<div style="left:328px;top:792px;width:1258px;height:3px;background:#1f74b4"></div>
<div class="t" style="left:721.20px;top:817.30px;font-size:13px;line-height:13px;letter-spacing:0.000px;color:#d81b1b;font-weight:bold;">*</div>
<div class="t r" style="left:729.50px;top:817.30px;font-size:13px;line-height:13px;letter-spacing:0.012px;color:#606060;">Lhůta:</div>
<div style="left:776px;top:815px;width:438px;height:21px;background:#fcf6c5;border:1px solid #dcd39a;border-radius:3px;box-sizing:border-box"></div>
<div style="left:986px;top:817px;width:18px;height:16.5px;background:#c3daf3;border-radius:3px"></div>
<svg style="left:988.5px;top:818.5px;width:13px;height:13px;" viewBox="0 0 13 13"><rect x="0.7" y="2" width="11.6" height="10.3" rx="0.8" fill="none" stroke="#1f74b4" stroke-width="1"/><path d="M0.7 4.6H12.3" stroke="#1f74b4" stroke-width="1"/><path d="M3.6 0.5V3M9.4 0.5V3" stroke="#1f74b4" stroke-width="1"/></svg>
<div class="t r" style="left:639.30px;top:858.00px;font-size:13px;line-height:13px;letter-spacing:-0.204px;color:#606060;">Datum a čas otevírání:</div>
<div style="left:776px;top:856px;width:438px;height:21px;background:#f2f2f2;border:1px solid #d3d3d3;border-radius:3px;box-sizing:border-box"></div>
<svg style="left:988.5px;top:859.5px;width:13px;height:13px;" viewBox="0 0 13 13"><rect x="0.7" y="2" width="11.6" height="10.3" rx="0.8" fill="none" stroke="#777" stroke-width="1"/><path d="M0.7 4.6H12.3" stroke="#777" stroke-width="1"/><path d="M3.6 0.5V3M9.4 0.5V3" stroke="#777" stroke-width="1"/></svg>
<div style="left:776px;top:897px;width:438px;height:21px;background:#e3e3e3;border-radius:5px"></div>
<div class="t r" style="left:904.70px;top:901.00px;font-size:13px;line-height:13px;letter-spacing:-0.345px;color:#8a8a8a;">Odeslání výzvy k podání nabídek</div>
<div class="t" style="left:343.60px;top:941.93px;font-size:14.5px;line-height:14.5px;letter-spacing:0.035px;color:#2e3640;font-weight:bold;">Přehled podaných nabídek</div>
<div style="left:343px;top:963px;width:1228px;height:166px;border:3px solid #dcdde0;border-radius:9px;box-sizing:border-box"></div>
<svg style="left:353px;top:978.5px;width:18px;height:17px;" viewBox="0 0 18 17"><path d="M7.5 15.5H2.2Q1.2 15.5 1.2 14.5V4.2Q1.2 3.2 2.2 3.2H3.8M10.2 3.2H11.8Q12.8 3.2 12.8 4.2V6.5" fill="none" stroke="#aaa" stroke-width="1.2"/><path d="M3.8 4.8V2.2H5.6Q6 0.7 7 0.7Q8 0.7 8.4 2.2H10.2V4.8Z" fill="none" stroke="#aaa" stroke-width="1.1" stroke-linejoin="round"/><path d="M3 7.3H6.5M3 9.8H5M3 12.3H5" stroke="#aaa" stroke-width="1.1"/><circle cx="12" cy="11.6" r="4.3" fill="none" stroke="#aaa" stroke-width="1.7" stroke-dasharray="1.7 1.68"/><circle cx="12" cy="11.6" r="2.9" fill="none" stroke="#aaa" stroke-width="1.3"/><circle cx="12" cy="11.6" r="0.9" fill="#aaa"/></svg>
<div class="t r" style="left:374.40px;top:980.50px;font-size:13px;line-height:13px;letter-spacing:-0.327px;color:#999;">Evidovat nabídku</div>
<div style="left:476px;top:977px;width:1px;height:18px;background:#1f74b4"></div>
<svg style="left:484px;top:977px;width:18px;height:18px;" viewBox="0 0 18 18"><path d="M4.6 4.3V2.2Q4.6 1.3 5.5 1.3H12.5Q13.4 1.3 13.4 2.2V4.3" fill="none" stroke="#1f74b4" stroke-width="1.15"/><path d="M4.6 12.3H2.5Q1.5 12.3 1.5 11.3V5.4Q1.5 4.4 2.5 4.4H15.5Q16.5 4.4 16.5 5.4V11.3Q16.5 12.3 15.5 12.3H13.4" fill="none" stroke="#1f74b4" stroke-width="1.15"/><path d="M3.2 6.5H4.2" stroke="#1f74b4" stroke-width="1"/><rect x="4.6" y="8.4" width="8.8" height="7.6" rx="0.6" fill="#fff" stroke="#1f74b4" stroke-width="1.15"/><path d="M6.5 10.8H11.5M6.5 13H10" stroke="#1f74b4" stroke-width="1.05"/></svg>
<svg style="left:505.0px;top:982.76px;width:8.100000000000023px;height:6.480000000000018px;overflow:visible" viewBox="0 0 8.100000000000023 6.480000000000018"><path d="M0.55 0.55H7.55L4.05 5.98Z" fill="none" stroke="#1f74b4" stroke-width="1.05" stroke-linejoin="round"/></svg>
<div style="left:524px;top:977px;width:1px;height:18px;background:#1f74b4"></div>
<svg style="left:534px;top:977px;width:16px;height:18px;" viewBox="0 0 16 18"><path d="M8 10.3V1.6M5.3 4.2L8 1.3L10.7 4.2" fill="none" stroke="#1f74b4" stroke-width="1.1"/><path d="M5.2 6.3H3.3Q2.3 6.3 2.3 7.3V14.8Q2.3 15.8 3.3 15.8H12.7Q13.7 15.8 13.7 14.8V7.3Q13.7 6.3 12.7 6.3H10.8" fill="none" stroke="#1f74b4" stroke-width="1.15"/></svg>
<svg style="left:552.8px;top:982.64px;width:8.400000000000091px;height:6.7200000000000735px;overflow:visible" viewBox="0 0 8.400000000000091 6.7200000000000735"><path d="M0.55 0.55H7.85L4.20 6.22Z" fill="none" stroke="#1f74b4" stroke-width="1.05" stroke-linejoin="round"/></svg>
<div style="left:572px;top:977px;width:1px;height:18px;background:#1f74b4"></div>
<svg style="left:1485px;top:977px;width:18px;height:17px;" viewBox="0 0 18 17"><path d="M1.3 1.6H16.5Q16.5 6.3 10.5 7.6V13.8Q10.5 14.5 9.9 14.9L8.3 16.1Q7.4 16.6 7.4 15.6V7.6Q1.3 6.3 1.3 1.6Z" fill="none" stroke="#1f74b4" stroke-width="1.2" stroke-linejoin="round"/></svg>
<div style="left:1509px;top:977px;width:1px;height:18px;background:#1f74b4"></div>
<svg style="left:1520.9px;top:983.0600000000001px;width:8.599999999999909px;height:6.879999999999928px;overflow:visible" viewBox="0 0 8.599999999999909 6.879999999999928"><path d="M0.55 0.55H8.05L4.30 6.38Z" fill="none" stroke="#1f74b4" stroke-width="1.05" stroke-linejoin="round"/></svg>
<div class="t r" style="left:1538.00px;top:981.20px;font-size:13px;line-height:13px;letter-spacing:-1.440px;color:#1f74b4;">MW</div>
<div style="left:1567px;top:977px;width:1px;height:18px;background:#1f74b4"></div>
<div style="left:346px;top:1005px;width:1221.5px;height:38px;background:#f2f2f2;border-top:1px solid #dcdcdc;border-bottom:1px solid #d6d6d6;box-sizing:border-box"></div>
<div style="left:393px;top:1006px;width:1px;height:36px;background:#cfcfcf"></div>
<div style="left:473px;top:1006px;width:1px;height:36px;background:#cfcfcf"></div>
<div style="left:677px;top:1006px;width:1px;height:36px;background:#cfcfcf"></div>
<div style="left:777px;top:1006px;width:1px;height:36px;background:#cfcfcf"></div>
<div style="left:927px;top:1006px;width:1px;height:36px;background:#cfcfcf"></div>
<div style="left:1077px;top:1006px;width:1px;height:36px;background:#cfcfcf"></div>
<div style="left:1217px;top:1006px;width:1px;height:36px;background:#cfcfcf"></div>
<div style="left:1357px;top:1006px;width:1px;height:36px;background:#cfcfcf"></div>
<svg style="left:361.5px;top:1015.5px;width:17px;height:17px;" viewBox="0 0 17 17"><rect x="0.8" y="0.8" width="15.4" height="15.4" rx="1" fill="none" stroke="#444" stroke-width="1.1"/><path d="M3.2 6H13.2M3.2 10.5H13.2" stroke="#444" stroke-width="1"/><circle cx="11.2" cy="5.6" r="1.6" fill="#f2f2f2" stroke="#444" stroke-width="1"/><circle cx="6.2" cy="10.5" r="1.6" fill="#f2f2f2" stroke="#444" stroke-width="1"/></svg>
<div class="t" style="left:402.00px;top:1016.10px;font-size:13px;line-height:13px;letter-spacing:-0.796px;color:#000;font-weight:bold;">Číslo</div>
<svg style="left:436.5px;top:1015.5px;width:13px;height:13px;" viewBox="0 0 13 13"><path d="M6.5 12.5V1.5M1.2 6.8L6.5 1.5L11.8 6.8" fill="none" stroke="#111" stroke-width="1.4"/></svg>
<svg style="left:456.09999999999997px;top:1018.9599999999999px;width:7.60000000000008px;height:6.080000000000064px;overflow:visible" viewBox="0 0 7.60000000000008 6.080000000000064"><path d="M0.55 0.55H7.05L3.80 5.58Z" fill="none" stroke="#3a3f45" stroke-width="1.05" stroke-linejoin="round"/></svg>
<div class="t r" style="left:482.30px;top:1016.10px;font-size:13px;line-height:13px;letter-spacing:-0.311px;color:#5c5c5c;">Název dodavatele</div>
<svg style="left:660.3px;top:1019.04px;width:7.400000000000091px;height:5.920000000000073px;overflow:visible" viewBox="0 0 7.400000000000091 5.920000000000073"><path d="M0.55 0.55H6.85L3.70 5.42Z" fill="none" stroke="#3a3f45" stroke-width="1.05" stroke-linejoin="round"/></svg>
<div class="t r" style="left:686.50px;top:1016.10px;font-size:13px;line-height:13px;letter-spacing:0.000px;color:#5c5c5c;">IČO</div>
<svg style="left:760.4px;top:1019.16px;width:7.100000000000023px;height:5.680000000000018px;overflow:visible" viewBox="0 0 7.100000000000023 5.680000000000018"><path d="M0.55 0.55H6.55L3.55 5.18Z" fill="none" stroke="#3a3f45" stroke-width="1.05" stroke-linejoin="round"/></svg>
<div class="t r" style="left:786.30px;top:1016.10px;font-size:13px;line-height:13px;letter-spacing:-0.267px;color:#5c5c5c;">Datum podání</div>
<svg style="left:910.5px;top:1019.16px;width:7.100000000000023px;height:5.680000000000018px;overflow:visible" viewBox="0 0 7.100000000000023 5.680000000000018"><path d="M0.55 0.55H6.55L3.55 5.18Z" fill="none" stroke="#3a3f45" stroke-width="1.05" stroke-linejoin="round"/></svg>
<div class="t r" style="left:936.00px;top:1016.10px;font-size:13px;line-height:13px;letter-spacing:0.000px;color:#5c5c5c;">Stav</div>
<svg style="left:1060.3000000000002px;top:1018.9600000000002px;width:7.599999999999682px;height:6.079999999999746px;overflow:visible" viewBox="0 0 7.599999999999682 6.079999999999746"><path d="M0.55 0.55H7.05L3.80 5.58Z" fill="none" stroke="#3a3f45" stroke-width="1.05" stroke-linejoin="round"/></svg>
<div class="t r" style="left:1086.10px;top:1016.10px;font-size:13px;line-height:13px;letter-spacing:-0.207px;color:#5c5c5c;">Podaná po lhůtě</div>
<svg style="left:1200.2px;top:1019.0000000000001px;width:7.499999999999773px;height:5.999999999999819px;overflow:visible" viewBox="0 0 7.499999999999773 5.999999999999819"><path d="M0.55 0.55H6.95L3.75 5.50Z" fill="none" stroke="#3a3f45" stroke-width="1.05" stroke-linejoin="round"/></svg>
<div class="t r" style="left:1226.00px;top:1016.10px;font-size:13px;line-height:13px;letter-spacing:-0.132px;color:#5c5c5c;">Listinná podoba</div>
<svg style="left:1340.4px;top:1018.96px;width:7.599999999999909px;height:6.079999999999927px;overflow:visible" viewBox="0 0 7.599999999999909 6.079999999999927"><path d="M0.55 0.55H7.05L3.80 5.58Z" fill="none" stroke="#3a3f45" stroke-width="1.05" stroke-linejoin="round"/></svg>
<div class="t r" style="left:1366.20px;top:1016.10px;font-size:13px;line-height:13px;letter-spacing:-0.290px;color:#5c5c5c;">Označena jako nepodaná</div>
<svg style="left:1550.4px;top:1018.96px;width:7.599999999999909px;height:6.079999999999927px;overflow:visible" viewBox="0 0 7.599999999999909 6.079999999999927"><path d="M0.55 0.55H7.05L3.80 5.58Z" fill="none" stroke="#3a3f45" stroke-width="1.05" stroke-linejoin="round"/></svg>
<svg style="left:981px;top:1068px;width:28px;height:13px;" viewBox="0 0 28 13"><path d="M3.3 2.2H8.4Q10.5 6.4 13.9 6.4Q17.3 6.4 19.4 2.2H24.7Q26.2 2.2 26.2 3.7V10Q26.2 11.5 24.7 11.5H3.3Q1.8 11.5 1.8 10V3.7Q1.8 2.2 3.3 2.2Z" fill="none" stroke="#666" stroke-width="1.5"/></svg>
<div class="t r" style="left:860.20px;top:1093.20px;font-size:13px;line-height:13px;letter-spacing:-0.123px;color:#555;">Žádné záznamy. Nebyla učiněna žádná podání.</div>
</body></html>
